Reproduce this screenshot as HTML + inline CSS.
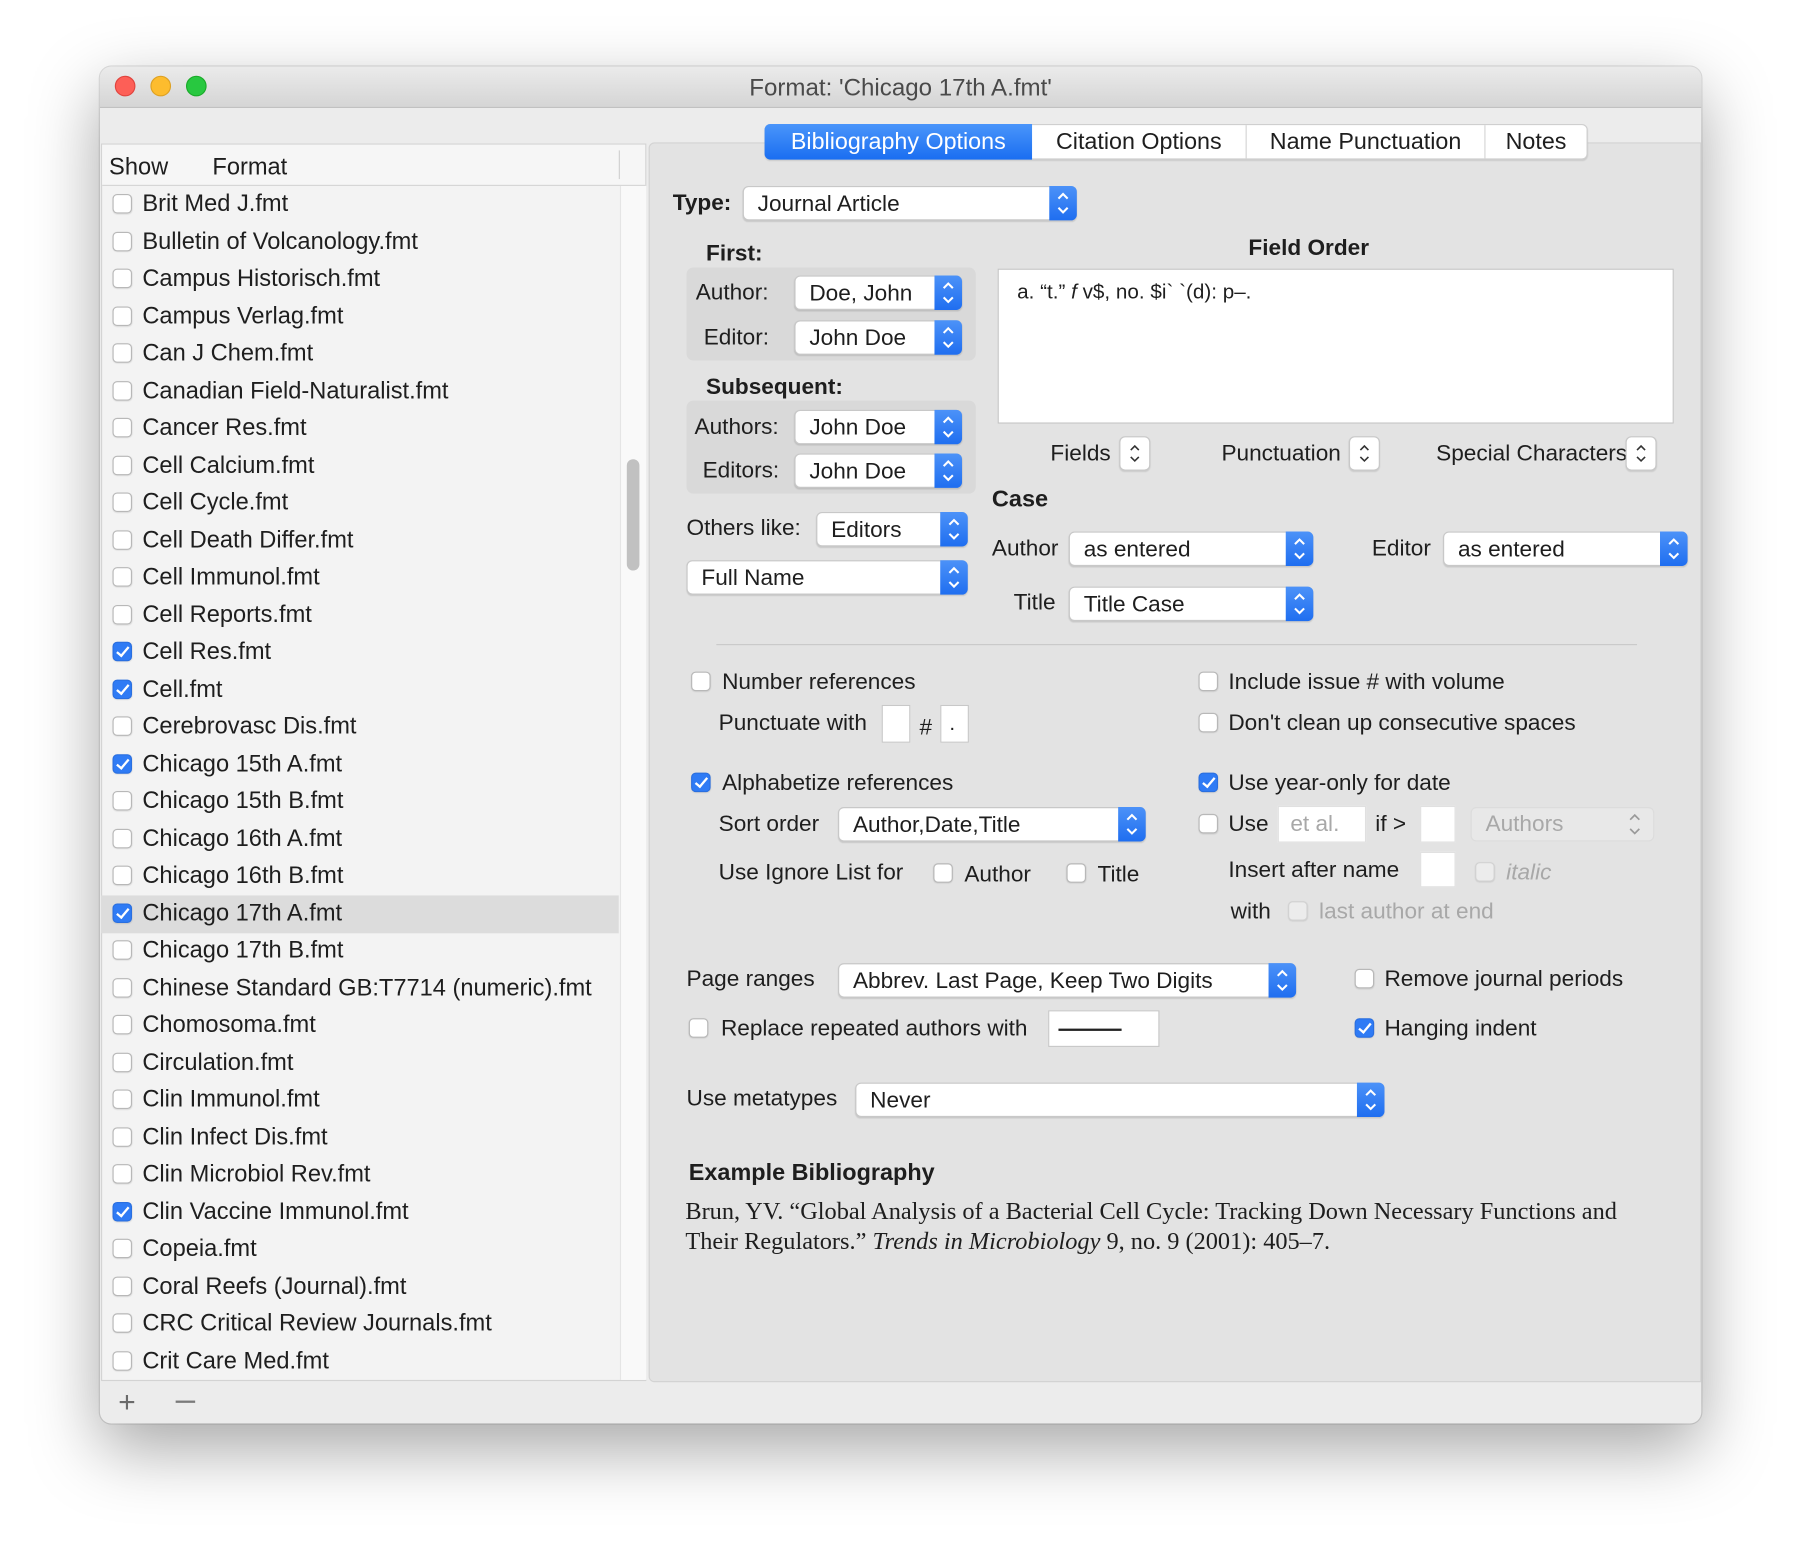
<!DOCTYPE html>
<html><head><meta charset="utf-8">
<style>
html,body{margin:0;padding:0;background:#fff;}
body{width:1800px;height:1555px;overflow:hidden;position:relative;font-family:"Liberation Sans",sans-serif;color:#1e1e1e;}
#s{position:absolute;left:0;top:0;width:1568px;height:1355px;transform:scale(1.148);transform-origin:0 0;}
.a{position:absolute;}
.t{position:absolute;font-size:19.7px;line-height:26px;height:26px;white-space:nowrap;}
.b{font-weight:bold;}
.cb{position:absolute;width:17px;height:17px;border:1px solid #b8b8b8;border-radius:4px;background:#fff;box-sizing:border-box;box-shadow:0 0.5px 1px rgba(0,0,0,.1);}
.cb.on{background:#2f7bf5;border-color:#2a6fe0;}
.cb.on:after{content:"";position:absolute;left:5px;top:1px;width:4px;height:9px;border:solid #fff;border-width:0 2px 2px 0;transform:rotate(40deg);}
.cb.dis{background:#ececec;border-color:#d2d2d2;}
.pop{position:absolute;background:#fff;border:1px solid #c8c8c8;border-radius:5px;box-sizing:border-box;box-shadow:0 1px 1px rgba(0,0,0,.12);font-size:19.7px;}
.pop span{position:absolute;left:12px;top:50%;transform:translateY(-45%);white-space:nowrap;}
.pop i{position:absolute;right:-1px;top:-1px;bottom:-1px;width:24px;background:linear-gradient(#4c92f8,#1f6ef0);border-radius:0 5px 5px 0;}
.pop i svg{position:absolute;left:0;top:50%;margin-top:-15px;}
.box{position:absolute;background:#fff;border:1px solid #c8c8c8;box-sizing:border-box;}
.step{position:absolute;width:27px;height:30px;background:#fff;border:1px solid #c8c8c8;border-radius:5px;box-sizing:border-box;box-shadow:0 1px 1px rgba(0,0,0,.1);}
.row{position:absolute;left:1px;width:450px;height:32.5px;font-size:20.6px;}
.row .cb{left:10px;top:8px;}
.row span{position:absolute;left:36px;top:5px;line-height:24px;white-space:nowrap;}
</style></head><body>
<div id="s">
<div class="a" style="left:87px;top:58px;width:1395px;height:1182px;border-radius:10px;background:#ececec;box-shadow:0 22px 60px rgba(0,0,0,.35),0 0 0 1px rgba(0,0,0,.12);overflow:hidden;">
  <div class="a" style="left:0;top:0;width:1395px;height:35px;background:linear-gradient(#ebebeb,#d5d5d5);border-bottom:1px solid #bdbdbd;">
    <div class="a" style="left:13px;top:8px;width:18px;height:18px;border-radius:50%;background:#fd5f57;border:1px solid #e0443e;box-sizing:border-box"></div>
    <div class="a" style="left:44px;top:8px;width:18px;height:18px;border-radius:50%;background:#fdbc2e;border:1px solid #dea123;box-sizing:border-box"></div>
    <div class="a" style="left:75px;top:8px;width:18px;height:18px;border-radius:50%;background:#28c840;border:1px solid #1aab29;box-sizing:border-box"></div>
    <div class="a" style="left:0;width:1395px;top:6px;text-align:center;font-size:21px;line-height:26px;color:#4a4a4a;">Format: 'Chicago 17th A.fmt'</div>
  </div>
  <div class="a" style="left:1px;top:67px;width:475px;height:1078px;background:#f3f3f3;border:1px solid #d3d3d3;box-sizing:border-box;">
    <div class="a" style="left:0;top:0;width:473px;height:35px;background:#f6f6f6;border-bottom:1px solid #d6d6d6;font-size:20.6px;">
      <span class="a" style="left:6px;top:8px;">Show</span>
      <span class="a" style="left:96px;top:8px;">Format</span>
      <div class="a" style="left:450px;top:5px;width:1px;height:25px;background:#d0d0d0"></div>
    </div>
    <div class="a" style="left:451px;top:36px;width:22px;height:1040px;background:#f9f9f9;border-left:1px solid #e5e5e5;"></div>
    <div class="a" style="left:457px;top:274px;width:11px;height:97px;border-radius:6px;background:#c1c1c1;"></div>
  </div>
  <div class="a" style="left:1px;top:722px;width:451px;height:32.5px;background:#dcdcdc;"></div>
  <div class="a" style="left:0;top:103px;">
    <div class="row" style="top:0px"><div class="cb"></div><span>Brit Med J.fmt</span></div>
    <div class="row" style="top:32.5px"><div class="cb"></div><span>Bulletin of Volcanology.fmt</span></div>
    <div class="row" style="top:65px"><div class="cb"></div><span>Campus Historisch.fmt</span></div>
    <div class="row" style="top:97.5px"><div class="cb"></div><span>Campus Verlag.fmt</span></div>
    <div class="row" style="top:130px"><div class="cb"></div><span>Can J Chem.fmt</span></div>
    <div class="row" style="top:162.5px"><div class="cb"></div><span>Canadian Field-Naturalist.fmt</span></div>
    <div class="row" style="top:195px"><div class="cb"></div><span>Cancer Res.fmt</span></div>
    <div class="row" style="top:227.5px"><div class="cb"></div><span>Cell Calcium.fmt</span></div>
    <div class="row" style="top:260px"><div class="cb"></div><span>Cell Cycle.fmt</span></div>
    <div class="row" style="top:292.5px"><div class="cb"></div><span>Cell Death Differ.fmt</span></div>
    <div class="row" style="top:325px"><div class="cb"></div><span>Cell Immunol.fmt</span></div>
    <div class="row" style="top:357.5px"><div class="cb"></div><span>Cell Reports.fmt</span></div>
    <div class="row" style="top:390px"><div class="cb on"></div><span>Cell Res.fmt</span></div>
    <div class="row" style="top:422.5px"><div class="cb on"></div><span>Cell.fmt</span></div>
    <div class="row" style="top:455px"><div class="cb"></div><span>Cerebrovasc Dis.fmt</span></div>
    <div class="row" style="top:487.5px"><div class="cb on"></div><span>Chicago 15th A.fmt</span></div>
    <div class="row" style="top:520px"><div class="cb"></div><span>Chicago 15th B.fmt</span></div>
    <div class="row" style="top:552.5px"><div class="cb"></div><span>Chicago 16th A.fmt</span></div>
    <div class="row" style="top:585px"><div class="cb"></div><span>Chicago 16th B.fmt</span></div>
    <div class="row" style="top:617.5px"><div class="cb on"></div><span>Chicago 17th A.fmt</span></div>
    <div class="row" style="top:650px"><div class="cb"></div><span>Chicago 17th B.fmt</span></div>
    <div class="row" style="top:682.5px"><div class="cb"></div><span>Chinese Standard GB:T7714 (numeric).fmt</span></div>
    <div class="row" style="top:715px"><div class="cb"></div><span>Chomosoma.fmt</span></div>
    <div class="row" style="top:747.5px"><div class="cb"></div><span>Circulation.fmt</span></div>
    <div class="row" style="top:780px"><div class="cb"></div><span>Clin Immunol.fmt</span></div>
    <div class="row" style="top:812.5px"><div class="cb"></div><span>Clin Infect Dis.fmt</span></div>
    <div class="row" style="top:845px"><div class="cb"></div><span>Clin Microbiol Rev.fmt</span></div>
    <div class="row" style="top:877.5px"><div class="cb on"></div><span>Clin Vaccine Immunol.fmt</span></div>
    <div class="row" style="top:910px"><div class="cb"></div><span>Copeia.fmt</span></div>
    <div class="row" style="top:942.5px"><div class="cb"></div><span>Coral Reefs (Journal).fmt</span></div>
    <div class="row" style="top:975px"><div class="cb"></div><span>CRC Critical Review Journals.fmt</span></div>
    <div class="row" style="top:1007.5px"><div class="cb"></div><span>Crit Care Med.fmt</span></div>
  </div>
  <div class="a" style="left:16px;top:1148px;font-size:26px;color:#6a6a6a;line-height:30px;">+</div>
  <div class="a" style="left:66px;top:1162px;width:17px;height:2px;background:#7a7a7a;"></div>
  <div class="a" style="left:478px;top:66px;width:917px;height:1080px;background:#e3e3e3;border:1px solid #d3d3d3;border-radius:5px 0 0 5px;box-sizing:border-box;"></div>
</div>

<div class="a" style="left:666px;top:108px;width:717px;height:31px;border-radius:5px;background:#fff;border:1px solid #cfcfcf;box-sizing:border-box;box-shadow:0 1px 1px rgba(0,0,0,.1);font-size:20.3px;">
  <div class="a" style="left:-1px;top:-1px;width:233px;height:31px;background:linear-gradient(#4a95fa,#1a6ef1);border-radius:5px 0 0 5px;color:#fff;text-align:center;line-height:32px;">Bibliography Options</div>
  <div class="a" style="left:232px;top:0;width:186px;height:29px;line-height:30px;text-align:center;border-right:1px solid #d5d5d5;">Citation Options</div>
  <div class="a" style="left:419px;top:0;width:207px;height:29px;line-height:30px;text-align:center;border-right:1px solid #d5d5d5;">Name Punctuation</div>
  <div class="a" style="left:627px;top:0;width:88px;height:29px;line-height:30px;text-align:center;">Notes</div>
</div>

<div class="t b" style="left:586px;top:164px;">Type:</div>
<div class="pop" style="left:647px;top:162px;width:291px;height:30px;"><span>Journal Article</span><i><svg width="24" height="30"><path d="M8 11L12 7L16 11M8 19L12 23L16 19" stroke="#fff" stroke-width="1.8" fill="none"/></svg></i></div>

<div class="t b" style="left:615px;top:208px;">First:</div>
<div class="a" style="left:598px;top:233px;width:252px;height:81px;background:#d9d9d9;border-radius:6px;"></div>
<div class="t" style="left:606px;top:242px;">Author:</div>
<div class="pop" style="left:692px;top:240px;width:146px;height:30px;"><span>Doe, John</span><i><svg width="24" height="30"><path d="M8 11L12 7L16 11M8 19L12 23L16 19" stroke="#fff" stroke-width="1.8" fill="none"/></svg></i></div>
<div class="t" style="left:613px;top:281px;">Editor:</div>
<div class="pop" style="left:692px;top:279px;width:146px;height:30px;"><span>John Doe</span><i><svg width="24" height="30"><path d="M8 11L12 7L16 11M8 19L12 23L16 19" stroke="#fff" stroke-width="1.8" fill="none"/></svg></i></div>

<div class="t b" style="left:615px;top:324px;">Subsequent:</div>
<div class="a" style="left:598px;top:349px;width:252px;height:81px;background:#d9d9d9;border-radius:6px;"></div>
<div class="t" style="left:605px;top:359px;">Authors:</div>
<div class="pop" style="left:692px;top:357px;width:146px;height:30px;"><span>John Doe</span><i><svg width="24" height="30"><path d="M8 11L12 7L16 11M8 19L12 23L16 19" stroke="#fff" stroke-width="1.8" fill="none"/></svg></i></div>
<div class="t" style="left:612px;top:397px;">Editors:</div>
<div class="pop" style="left:692px;top:395px;width:146px;height:30px;"><span>John Doe</span><i><svg width="24" height="30"><path d="M8 11L12 7L16 11M8 19L12 23L16 19" stroke="#fff" stroke-width="1.8" fill="none"/></svg></i></div>

<div class="t" style="left:598px;top:447px;">Others like:</div>
<div class="pop" style="left:711px;top:446px;width:132px;height:30px;"><span>Editors</span><i><svg width="24" height="30"><path d="M8 11L12 7L16 11M8 19L12 23L16 19" stroke="#fff" stroke-width="1.8" fill="none"/></svg></i></div>
<div class="pop" style="left:598px;top:488px;width:245px;height:30px;"><span>Full Name</span><i><svg width="24" height="30"><path d="M8 11L12 7L16 11M8 19L12 23L16 19" stroke="#fff" stroke-width="1.8" fill="none"/></svg></i></div>

<div class="t b" style="left:1040px;width:200px;text-align:center;top:203px;">Field Order</div>
<div class="box" style="left:869px;top:234px;width:589px;height:135px;border-color:#c4c4c4;"><span class="a" style="left:16px;top:9px;font-size:18px;">a. “t.” <i>f</i> v$, no. $i` `(d): p–.</span></div>

<div class="t" style="left:915px;top:382px;">Fields</div>
<div class="step" style="left:975px;top:380px;"><svg width="25" height="28"><path d="M9 11L12.5 7.5L16 11M9 17L12.5 20.5L16 17" stroke="#333" stroke-width="1.4" fill="none"/></svg></div>
<div class="t" style="left:1064px;top:382px;">Punctuation</div>
<div class="step" style="left:1175px;top:380px;"><svg width="25" height="28"><path d="M9 11L12.5 7.5L16 11M9 17L12.5 20.5L16 17" stroke="#333" stroke-width="1.4" fill="none"/></svg></div>
<div class="t" style="left:1251px;top:382px;">Special Characters</div>
<div class="step" style="left:1416px;top:380px;"><svg width="25" height="28"><path d="M9 11L12.5 7.5L16 11M9 17L12.5 20.5L16 17" stroke="#333" stroke-width="1.4" fill="none"/></svg></div>

<div class="t b" style="left:864px;top:422px;font-size:20.5px;">Case</div>
<div class="t" style="left:864px;top:465px;">Author</div>
<div class="pop" style="left:931px;top:463px;width:213px;height:30px;"><span>as entered</span><i><svg width="24" height="30"><path d="M8 11L12 7L16 11M8 19L12 23L16 19" stroke="#fff" stroke-width="1.8" fill="none"/></svg></i></div>
<div class="t" style="left:1195px;top:465px;">Editor</div>
<div class="pop" style="left:1257px;top:463px;width:213px;height:30px;"><span>as entered</span><i><svg width="24" height="30"><path d="M8 11L12 7L16 11M8 19L12 23L16 19" stroke="#fff" stroke-width="1.8" fill="none"/></svg></i></div>
<div class="t" style="left:883px;top:512px;">Title</div>
<div class="pop" style="left:931px;top:511px;width:213px;height:30px;"><span>Title Case</span><i><svg width="24" height="30"><path d="M8 11L12 7L16 11M8 19L12 23L16 19" stroke="#fff" stroke-width="1.8" fill="none"/></svg></i></div>

<div class="a" style="left:624px;top:561px;width:802px;height:1px;background:#c9c9c9;"></div>

<div class="cb" style="left:602px;top:585px;"></div><div class="t" style="left:629px;top:581px;">Number references</div>
<div class="t" style="left:626px;top:617px;">Punctuate with</div>
<div class="box" style="left:768px;top:614px;width:25px;height:33px;"></div>
<div class="t" style="left:801px;top:621px;">#</div>
<div class="box" style="left:819px;top:614px;width:25px;height:33px;"><span class="a" style="left:7px;top:5px;font-size:18px;">.</span></div>
<div class="cb" style="left:1044px;top:585px;"></div><div class="t" style="left:1070px;top:581px;">Include issue # with volume</div>
<div class="cb" style="left:1044px;top:621px;"></div><div class="t" style="left:1070px;top:617px;">Don't clean up consecutive spaces</div>

<div class="cb on" style="left:602px;top:673px;"></div><div class="t" style="left:629px;top:669px;">Alphabetize references</div>
<div class="cb on" style="left:1044px;top:673px;"></div><div class="t" style="left:1070px;top:669px;">Use year-only for date</div>

<div class="t" style="left:626px;top:705px;">Sort order</div>
<div class="pop" style="left:730px;top:703px;width:268px;height:30px;"><span>Author,Date,Title</span><i><svg width="24" height="30"><path d="M8 11L12 7L16 11M8 19L12 23L16 19" stroke="#fff" stroke-width="1.8" fill="none"/></svg></i></div>
<div class="cb" style="left:1044px;top:709px;"></div><div class="t" style="left:1070px;top:705px;">Use</div>
<div class="box" style="left:1113px;top:702px;width:77px;height:32px;border-color:#e0e0e0;"><span class="a" style="left:10px;top:4px;font-size:19.7px;color:#a8a8a8;">et al.</span></div>
<div class="t" style="left:1198px;top:705px;">if &gt;</div>
<div class="box" style="left:1237px;top:702px;width:31px;height:32px;border-color:#e0e0e0;"></div>
<div class="a" style="left:1281px;top:703px;width:160px;height:30px;border:1px solid #dcdcdc;border-radius:5px;box-sizing:border-box;background:#e8e8e8;"><span class="a" style="left:12px;top:3px;font-size:19.7px;color:#a8a8a8;">Authors</span><svg class="a" style="right:4px;top:0" width="24" height="28"><path d="M8 10L12 6L16 10M8 18L12 22L16 18" stroke="#9a9a9a" stroke-width="1.5" fill="none"/></svg></div>

<div class="t" style="left:626px;top:747px;">Use Ignore List for</div>
<div class="cb" style="left:813px;top:752px;"></div><div class="t" style="left:840px;top:749px;">Author</div>
<div class="cb" style="left:929px;top:752px;"></div><div class="t" style="left:956px;top:749px;">Title</div>
<div class="t" style="left:1070px;top:745px;">Insert after name</div>
<div class="box" style="left:1237px;top:742px;width:31px;height:31px;border-color:#e0e0e0;"></div>
<div class="cb dis" style="left:1285px;top:751px;"></div><div class="t" style="left:1312px;top:747px;color:#a8a8a8;font-style:italic;">italic</div>
<div class="t" style="left:1072px;top:781px;">with</div>
<div class="cb dis" style="left:1122px;top:785px;"></div><div class="t" style="left:1149px;top:781px;color:#a8a8a8;">last author at end</div>

<div class="t" style="left:598px;top:840px;">Page ranges</div>
<div class="pop" style="left:730px;top:839px;width:399px;height:30px;"><span>Abbrev. Last Page, Keep Two Digits</span><i><svg width="24" height="30"><path d="M8 11L12 7L16 11M8 19L12 23L16 19" stroke="#fff" stroke-width="1.8" fill="none"/></svg></i></div>
<div class="cb" style="left:1180px;top:844px;"></div><div class="t" style="left:1206px;top:840px;">Remove journal periods</div>
<div class="cb" style="left:600px;top:887px;"></div><div class="t" style="left:628px;top:883px;">Replace repeated authors with</div>
<div class="box" style="left:913px;top:880px;width:97px;height:32px;"><div class="a" style="left:8px;top:15px;width:55px;height:1.5px;background:#222;"></div></div>
<div class="cb on" style="left:1180px;top:887px;"></div><div class="t" style="left:1206px;top:883px;">Hanging indent</div>

<div class="t" style="left:598px;top:944px;">Use metatypes</div>
<div class="pop" style="left:745px;top:943px;width:461px;height:30px;"><span>Never</span><i><svg width="24" height="30"><path d="M8 11L12 7L16 11M8 19L12 23L16 19" stroke="#fff" stroke-width="1.8" fill="none"/></svg></i></div>

<div class="t b" style="left:600px;top:1009px;font-size:20.4px;">Example Bibliography</div>
<div class="a" style="left:597px;top:1042px;font-family:'Liberation Serif',serif;font-size:21.2px;line-height:26px;white-space:nowrap;">Brun, YV. “Global Analysis of a Bacterial Cell Cycle: Tracking Down Necessary Functions and<br>Their Regulators.” <i>Trends in Microbiology</i> 9, no. 9 (2001): 405–7.</div>
</div>
</body></html>
